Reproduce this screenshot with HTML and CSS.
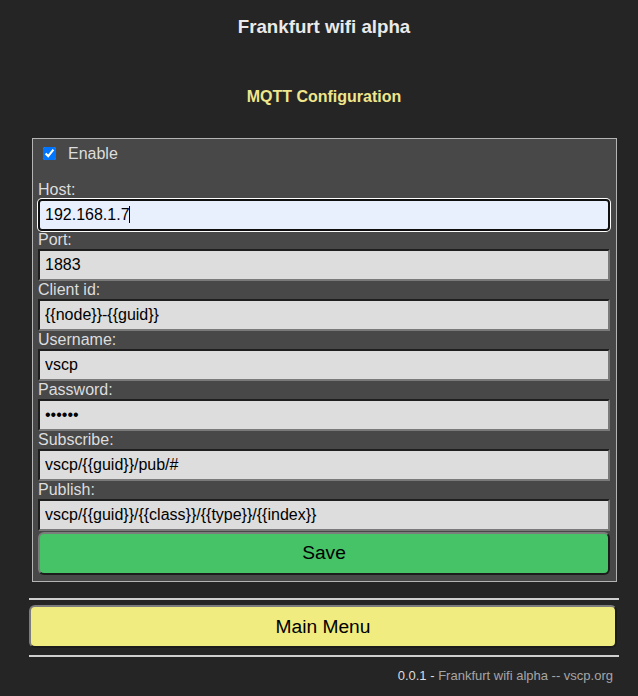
FILE: index.html
```html
<!DOCTYPE html>
<html>
<head>
<meta charset="utf-8">
<title>Frankfurt wifi alpha</title>
<link rel="stylesheet" href="styles.css">
</head>
<body>
<div class="wrap">
  <h3 class="title">Frankfurt wifi alpha</h3>
  <h4 class="section">MQTT Configuration</h4>
  <form class="form">
    <fieldset class="box">
      <div class="check">
        <input type="checkbox" id="en" class="cb" checked>
        <label for="en" class="cb-label">Enable</label>
      </div>
      <label class="lbl">Host:</label>
      <div class="inwrap">
        <input class="inp inp-focus" type="text" value="192.168.1.7">
        <span class="caret"></span>
      </div>
      <label class="lbl">Port:</label>
      <input class="inp" type="text" value="1883">
      <label class="lbl">Client id:</label>
      <input class="inp" type="text" value="{{node}}-{{guid}}">
      <label class="lbl">Username:</label>
      <input class="inp" type="text" value="vscp">
      <label class="lbl">Password:</label>
      <input class="inp" type="password" value="secret">
      <label class="lbl">Subscribe:</label>
      <input class="inp" type="text" value="vscp/{{guid}}/pub/#">
      <label class="lbl">Publish:</label>
      <input class="inp" type="text" value="vscp/{{guid}}/{{class}}/{{type}}/{{index}}">
      <button type="button" class="btn btn-save">Save</button>
    </fieldset>
  </form>
  <hr class="rule rule-top">
  <button type="button" class="btn btn-menu">Main Menu</button>
  <hr class="rule rule-bottom">
  <div class="footer"><span class="ver">0.0.1 - </span>Frankfurt wifi alpha -- vscp.org</div>
</div>
</body>
</html>
```

FILE: styles.css
```css
html, body {
  background: #252525;
}
body {
  margin: 0;
  padding: 0 19px 0 29px;
  font-family: "Liberation Sans", Arial, sans-serif;
  color: #dddddd;
}
.wrap {
  display: flex;
  flex-direction: column;
}
.title {
  margin: 16px 0 0;
  font-size: 18.72px;
  line-height: 22px;
  font-weight: bold;
  text-align: center;
  color: #eaeaea;
}
.section {
  margin: 50px 0 32px;
  font-size: 16px;
  line-height: 18px;
  font-weight: bold;
  text-align: center;
  color: #f0e68c;
}
.form {
  margin: 0;
}
.box {
  margin: 0 2px 0 3px;
  padding: 5px 6px 6px 5px;
  border: 1px solid #b4b4b4;
  background: #484848;
  display: flex;
  flex-direction: column;
  min-width: 0;
}
.check {
  display: flex;
  align-items: center;
  height: 19px;
  margin-bottom: 18px;
}
.cb {
  margin: 0 0 0 5px;
  width: 13px;
  height: 13px;
}
.cb-label {
  margin-left: 12px;
  font-size: 16px;
  color: #dddddd;
}
.lbl {
  display: block;
  font-size: 16px;
  line-height: 18px;
  height: 18px;
  color: #dddddd;
}
.inwrap {
  position: relative;
  display: flex;
}
.inp {
  box-sizing: border-box;
  width: 100%;
  height: 32px;
  margin: 0;
  padding: 0 5px;
  font-family: "Liberation Sans", Arial, sans-serif;
  font-size: 16px;
  color: #000;
  background: #dddddd;
  border: 2px solid;
  border-color: #1e1e1e #7a7a7a #7a7a7a #1e1e1e;
  border-radius: 0;
  outline: none;
}
.inp-focus {
  background: #e8f0fe;
  border-color: #101010;
  border-radius: 4px;
  box-shadow: 0 0 0 1px #ffffff;
}
.caret {
  position: absolute;
  left: 91px;
  top: 7px;
  width: 1px;
  height: 17px;
  background: #000;
}
.btn {
  box-sizing: border-box;
  width: 100%;
  height: 43px;
  padding: 0;
  font-family: "Liberation Sans", Arial, sans-serif;
  font-size: 19.2px;
  color: #000;
  border: 2px solid;
  border-color: #7c7c7c #1c1c1c #1c1c1c #7c7c7c;
  border-radius: 6px;
}
.btn-save {
  margin-top: 1px;
  padding-bottom: 1px;
  background: #46c267;
}
.btn-menu {
  width: 588px;
  background: #f0ec80;
}
.rule {
  border: 0;
  height: 2px;
  background: #cfcfcf;
  width: 100%;
}
.rule-top {
  margin: 16px 0 5px;
}
.rule-bottom {
  margin: 7px 0 0;
}
.footer {
  margin-top: 11px;
  padding-right: 6px;
  text-align: right;
  font-size: 13px;
  line-height: 15px;
  color: #a6a6a6;
}
.ver {
  color: #dddddd;
}
```
